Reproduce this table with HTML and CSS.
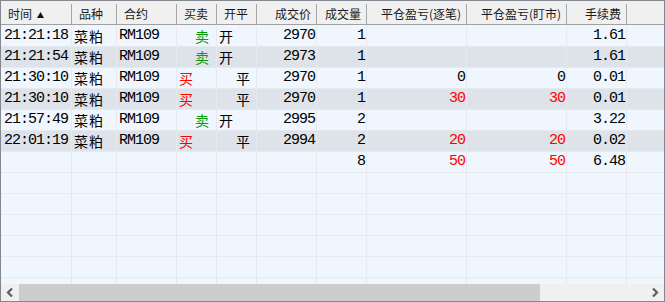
FILE: index.html
```html
<!DOCTYPE html>
<html>
<head>
<meta charset="utf-8">
<link rel="stylesheet" href="styles.css">
</head>
<body>
<div class="table">
  <div class="head cols">
    <div class="hc l">时间 <svg class="sort" width="7" height="6" viewBox="0 0 7 6"><path d="M3.5 0 L7 6 L0 6 Z" fill="#111"/></svg></div>
    <div class="hc l">品种</div>
    <div class="hc l">合约</div>
    <div class="hc l">买卖</div>
    <div class="hc l">开平</div>
    <div class="hc r">成交价</div>
    <div class="hc r">成交量</div>
    <div class="hc r">平仓盈亏(逐笔)</div>
    <div class="hc r">平仓盈亏(盯市)</div>
    <div class="hc r">手续费</div>
    <div class="hc last"></div>
  </div>
  <div class="body">
    <div class="row cols odd">
      <div class="c num l t">21:21:18</div><div class="c cn l p2">菜粕</div><div class="c num l p1">RM109</div>
      <div class="c cn"><span class="sell">卖</span></div><div class="c cn"><span class="open">开</span></div>
      <div class="c num r">2970</div><div class="c num r">1</div><div class="c num r"></div><div class="c num r"></div><div class="c num r">1.61</div><div class="c last"></div>
    </div>
    <div class="row cols even">
      <div class="c num l t">21:21:54</div><div class="c cn l p2">菜粕</div><div class="c num l p1">RM109</div>
      <div class="c cn"><span class="sell">卖</span></div><div class="c cn"><span class="open">开</span></div>
      <div class="c num r">2973</div><div class="c num r">1</div><div class="c num r"></div><div class="c num r"></div><div class="c num r">1.61</div><div class="c last"></div>
    </div>
    <div class="row cols odd">
      <div class="c num l t">21:30:10</div><div class="c cn l p2">菜粕</div><div class="c num l p1">RM109</div>
      <div class="c cn"><span class="buy">买</span></div><div class="c cn"><span class="close">平</span></div>
      <div class="c num r">2970</div><div class="c num r">1</div><div class="c num r">0</div><div class="c num r">0</div><div class="c num r">0.01</div><div class="c last"></div>
    </div>
    <div class="row cols even">
      <div class="c num l t">21:30:10</div><div class="c cn l p2">菜粕</div><div class="c num l p1">RM109</div>
      <div class="c cn"><span class="buy">买</span></div><div class="c cn"><span class="close">平</span></div>
      <div class="c num r">2970</div><div class="c num r">1</div><div class="c num r red">30</div><div class="c num r red">30</div><div class="c num r">0.01</div><div class="c last"></div>
    </div>
    <div class="row cols odd">
      <div class="c num l t">21:57:49</div><div class="c cn l p2">菜粕</div><div class="c num l p1">RM109</div>
      <div class="c cn"><span class="sell">卖</span></div><div class="c cn"><span class="open">开</span></div>
      <div class="c num r">2995</div><div class="c num r">2</div><div class="c num r"></div><div class="c num r"></div><div class="c num r">3.22</div><div class="c last"></div>
    </div>
    <div class="row cols even">
      <div class="c num l t">22:01:19</div><div class="c cn l p2">菜粕</div><div class="c num l p1">RM109</div>
      <div class="c cn"><span class="buy">买</span></div><div class="c cn"><span class="close">平</span></div>
      <div class="c num r">2994</div><div class="c num r">2</div><div class="c num r red">20</div><div class="c num r red">20</div><div class="c num r">0.02</div><div class="c last"></div>
    </div>
    <div class="row cols odd">
      <div class="c"></div><div class="c"></div><div class="c"></div><div class="c"></div><div class="c"></div>
      <div class="c"></div><div class="c num r">8</div><div class="c num r red">50</div><div class="c num r red">50</div><div class="c num r">6.48</div><div class="c last"></div>
    </div>
    <div class="row cols odd"><div class="c"></div><div class="c"></div><div class="c"></div><div class="c"></div><div class="c"></div><div class="c"></div><div class="c"></div><div class="c"></div><div class="c"></div><div class="c"></div><div class="c last"></div></div>
    <div class="row cols odd"><div class="c"></div><div class="c"></div><div class="c"></div><div class="c"></div><div class="c"></div><div class="c"></div><div class="c"></div><div class="c"></div><div class="c"></div><div class="c"></div><div class="c last"></div></div>
    <div class="row cols odd"><div class="c"></div><div class="c"></div><div class="c"></div><div class="c"></div><div class="c"></div><div class="c"></div><div class="c"></div><div class="c"></div><div class="c"></div><div class="c"></div><div class="c last"></div></div>
    <div class="row cols odd"><div class="c"></div><div class="c"></div><div class="c"></div><div class="c"></div><div class="c"></div><div class="c"></div><div class="c"></div><div class="c"></div><div class="c"></div><div class="c"></div><div class="c last"></div></div>
    <div class="row cols odd"><div class="c"></div><div class="c"></div><div class="c"></div><div class="c"></div><div class="c"></div><div class="c"></div><div class="c"></div><div class="c"></div><div class="c"></div><div class="c"></div><div class="c last"></div></div>
    <div class="row cols odd"><div class="c"></div><div class="c"></div><div class="c"></div><div class="c"></div><div class="c"></div><div class="c"></div><div class="c"></div><div class="c"></div><div class="c"></div><div class="c"></div><div class="c last"></div></div>
  </div>
  <div class="hscroll">
    <div class="sbtn"><svg width="8" height="9" viewBox="0 0 8 9"><path d="M6 0.5 L2 4.5 L6 8.5" fill="none" stroke="#5f5f5f" stroke-width="2.2"/></svg></div>
    <div class="thumb"></div>
    <div class="track"></div>
    <div class="sbtn"><svg width="8" height="9" viewBox="0 0 8 9"><path d="M2 0.5 L6 4.5 L2 8.5" fill="none" stroke="#5f5f5f" stroke-width="2.2"/></svg></div>
  </div>
</div>
</body>
</html>
```
FILE: styles.css
```css
html, body {
  margin: 0;
  padding: 0;
  background: #ffffff;
}

.table {
  width: 665px;
  height: 302px;
  box-sizing: border-box;
  border: 1px solid #828790;
  display: flex;
  flex-direction: column;
  overflow: hidden;
  background: #f0f6fe;
}

.cols {
  display: grid;
  grid-template-columns: 71px 45px 60px 40px 40px 60px 50px 100px 100px 60px 1fr;
}

.head {
  height: 24px;
  box-sizing: border-box;
  padding-top: 3px;
  background: #f0f0f0;
  border-bottom: 1px solid #a0a0a0;
  flex: none;
}

.hc {
  height: 20px;
  box-sizing: border-box;
  border-right: 1px solid #a7a7a7;
  font-family: "Noto Sans CJK SC", "Noto Sans", sans-serif;
  font-size: 12px;
  line-height: 19px;
  color: #1a1a1a;
  white-space: nowrap;
}

.hc.l { padding-left: 7px; }
.hc.r { text-align: right; padding-right: 5px; }
.hc.last { border-right: none; }

.sort {
  vertical-align: 1px;
  margin-left: 2px;
}

.body {
  flex: 1;
  overflow: hidden;
  padding-top: 1px;
}

.row {
  height: 21px;
  box-sizing: border-box;
  border-bottom: 1px solid #e6e9ee;
}

.row.odd { background: #f0f6fe; }
.row.even { background: #dee3ea; }

.c {
  box-sizing: border-box;
  border-right: 1px solid #e6e9ee;
  height: 20px;
  line-height: 20px;
  white-space: nowrap;
  color: #000;
}

.c.last { border-right: none; }

.num {
  font-family: "Liberation Mono", "Noto Sans CJK SC", monospace;
  font-size: 15px;
  letter-spacing: -1px;
}

.cn {
  font-family: "Noto Sans CJK SC", sans-serif;
  font-size: 14px;
  letter-spacing: 1px;
}

.c.r { text-align: right; padding-right: 1px; }
.c.t { padding-left: 3px; }
.c.p2 { padding-left: 2px; }
.c.p1 { padding-left: 2px; }

.red { color: #ff0000; }

.buy { color: #ff0000; padding-left: 2px; }
.sell { color: #0a9a0a; padding-left: 18px; }
.open { padding-left: 2px; }
.close { padding-left: 19px; }

.hscroll {
  height: 17px;
  flex: none;
  display: flex;
  background: #f0f0f0;
}

.sbtn {
  width: 18px;
  display: flex;
  align-items: center;
  justify-content: center;
}

.thumb {
  width: 521px;
  background: #cdcdcd;
}

.track {
  flex: 1;
}
```
